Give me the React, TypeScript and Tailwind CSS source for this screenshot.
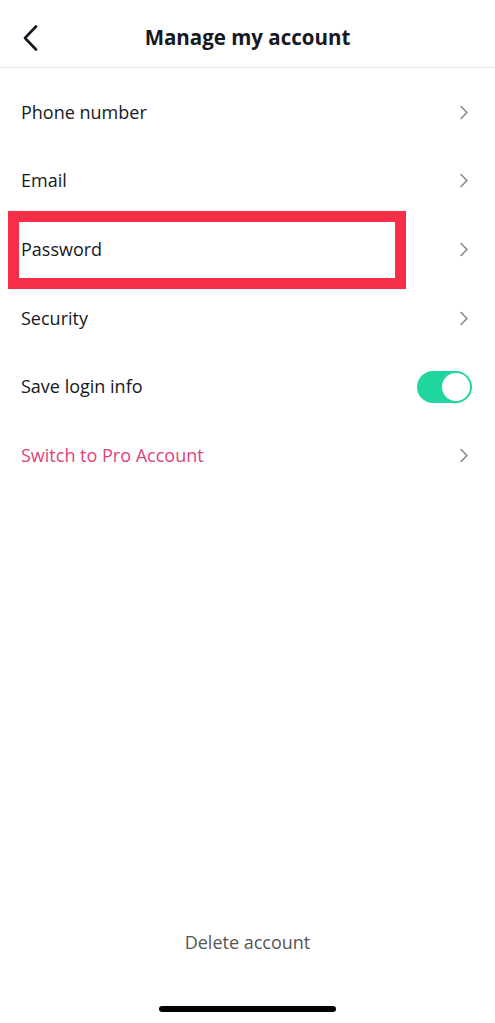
import React from 'react';

const Chevron: React.FC = () => (
  <svg width="10" height="15" viewBox="0 0 10 15" fill="none" className="shrink-0">
    <path d="M2 1.5 L8 7.5 L2 13.5" stroke="#8a8a8a" strokeWidth="1.6" strokeLinecap="round" strokeLinejoin="round" />
  </svg>
);

const App: React.FC = () => {
  const rows = [
    { label: 'Phone number' },
    { label: 'Email' },
    { label: 'Password', highlight: true },
    { label: 'Security' },
  ];

  return (
    <div className="w-[495px] h-[1023px] bg-white flex flex-col text-[#161823]" style={{ fontFamily: '"Open Sans", Lato, sans-serif' }}>
      {/* Header */}
      <div className="relative h-[68px] flex items-center justify-center border-b border-[#e6e6e6] shrink-0">
        <button className="absolute left-[22px] top-[25px]">
          <svg width="18" height="26" viewBox="0 0 18 26" fill="none">
            <path d="M14 1.5 L3 13 L14 24.5" stroke="#161823" strokeWidth="2.6" strokeLinecap="round" strokeLinejoin="round" />
          </svg>
        </button>
        <h1 className="text-[20.5px] font-bold pt-[8px]">Manage my account</h1>
      </div>

      {/* Rows */}
      <div className="flex flex-col pt-[10px]">
        {rows.map((row, index) => (
          <div key={index} className="relative h-[68.6px] flex items-center justify-between pl-[21px] pr-[26px]">
            {row.highlight && (
              <div className="absolute left-[8px] top-[-4px] w-[398px] h-[78px] border-[11px] border-[#f72e47]" />
            )}
            <span className="relative text-[18px]">{row.label}</span>
            <Chevron />
          </div>
        ))}

        <div className="h-[68.6px] flex items-center justify-between pl-[21px] pr-[23px]">
          <span className="text-[18px]">Save login info</span>
          <div className="w-[55px] h-[32px] rounded-full bg-[#20d5a0] flex items-center justify-end p-[2px]">
            <div className="w-[28px] h-[28px] rounded-full bg-white" />
          </div>
        </div>

        <div className="h-[68.6px] flex items-center justify-between pl-[21px] pr-[26px]">
          <span className="text-[18px] text-[#df4377]">Switch to Pro Account</span>
          <Chevron />
        </div>
      </div>

      <div className="flex-1" />

      {/* Footer */}
      <div className="flex justify-center pb-[50px]">
        <span className="text-[18px] text-[#555555]">Delete account</span>
      </div>
      <div className="flex justify-center pb-[11px]">
        <div className="w-[177px] h-[6px] rounded-full bg-black" />
      </div>
    </div>
  );
};

export default App;
